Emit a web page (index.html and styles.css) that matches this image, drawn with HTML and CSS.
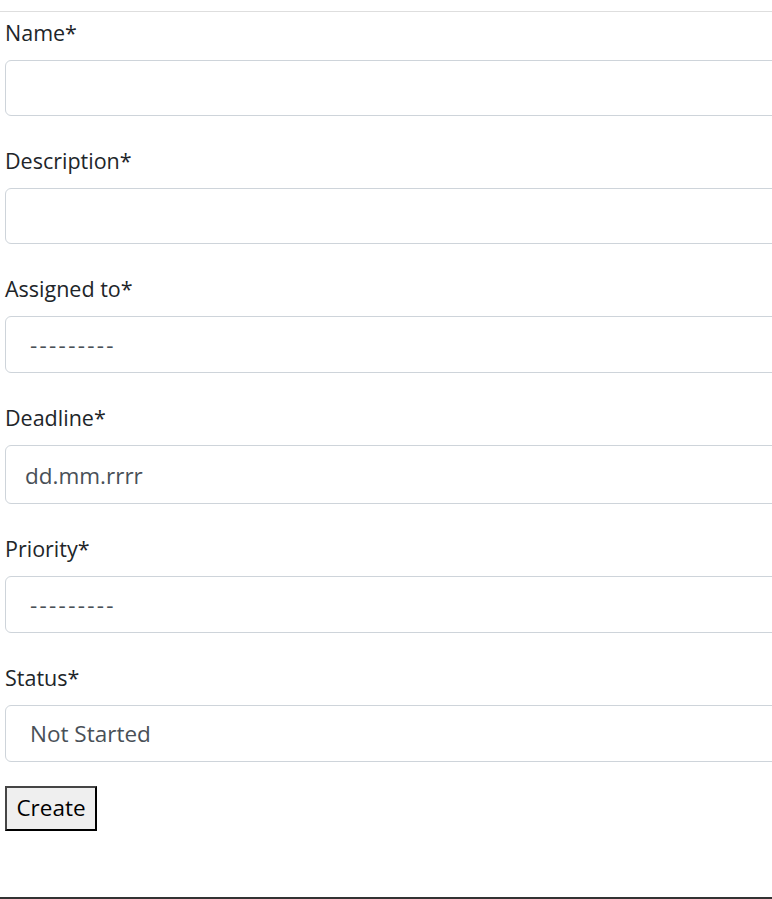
FILE: index.html
```html
<!DOCTYPE html>
<html>
<head>
<meta charset="utf-8">
<link rel="stylesheet" href="styles.css">
</head>
<body>
<div class="page">
  <hr class="top-rule">
  <form class="task-form">
    <div class="field">
      <label class="field-label">Name*</label>
      <div class="control"></div>
    </div>
    <div class="field">
      <label class="field-label">Description*</label>
      <div class="control"></div>
    </div>
    <div class="field">
      <label class="field-label">Assigned to*</label>
      <div class="control select"><span class="dashes">---------</span></div>
    </div>
    <div class="field">
      <label class="field-label">Deadline*</label>
      <div class="control date">dd.mm.rrrr</div>
    </div>
    <div class="field">
      <label class="field-label">Priority*</label>
      <div class="control select"><span class="dashes">---------</span></div>
    </div>
    <div class="field">
      <label class="field-label">Status*</label>
      <div class="control select">Not Started</div>
    </div>
    <button type="button" class="create-btn">Create</button>
  </form>
  <div class="bottom-rule"></div>
</div>
</body>
</html>
```
FILE: styles.css
```css
html, body {
  margin: 0;
  padding: 0;
  background: #fff;
  overflow: hidden;
}
.page {
  width: 772px;
  height: 899px;
  overflow: hidden;
  font-family: "Open Sans", "Noto Sans", sans-serif;
  color: #212529;
  display: flex;
  flex-direction: column;
}
.top-rule {
  margin: 11px 0 0 0;
  border: 0;
  border-top: 1px solid #dedede;
  height: 0;
}
.task-form {
  padding-left: 5px;
  display: flex;
  flex-direction: column;
  flex: 1;
}
.field {
  display: flex;
  flex-direction: column;
  margin-bottom: 30px;
}
.field:first-child {
  margin-top: 6px;
}
.field-label {
  font-size: 21.5px;
  line-height: 30px;
  margin-bottom: 12px;
}
.control {
  width: 820px;
  height: 56px;
  box-sizing: border-box;
  border: 1px solid #ced4da;
  border-radius: 6px;
  font-size: 22.5px;
  line-height: 54px;
  color: #495057;
  padding-left: 19px;
}
.control.select {
  height: 57px;
  line-height: 55px;
  padding-left: 24px;
}
.control.date {
  height: 59px;
  line-height: 59px;
}
.dashes {
  letter-spacing: 2.3px;
}
.create-btn {
  align-self: flex-start;
  margin-top: -6px;
  width: 92px;
  height: 45px;
  font-family: "Open Sans", "Noto Sans", sans-serif;
  font-size: 22.5px;
  line-height: 1;
  color: #000;
  background: #efefef;
  border-style: solid;
  border-width: 2px;
  border-color: #454545 #000 #000 #454545;
  padding: 0;
}
.bottom-rule {
  height: 2px;
  background: #333;
  margin-bottom: 0;
}
```
